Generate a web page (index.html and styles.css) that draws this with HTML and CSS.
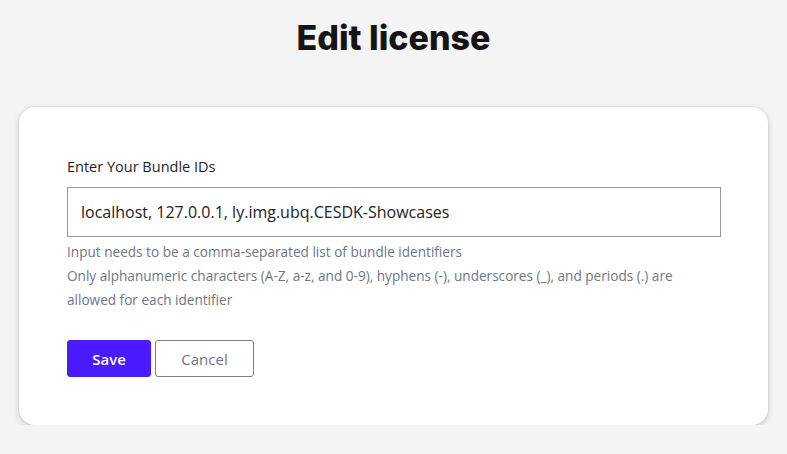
FILE: index.html
```html
<!DOCTYPE html>
<html lang="en">
<head>
<meta charset="utf-8">
<title>Edit license</title>
<link rel="stylesheet" href="styles.css">
</head>
<body>
<main class="page">
  <h1 class="title">Edit license</h1>
  <section class="card">
    <form class="form">
      <label class="label" for="bundle">Enter Your Bundle IDs</label>
      <input class="input" id="bundle" type="text" value="localhost, 127.0.0.1, ly.img.ubq.CESDK-Showcases">
      <p class="help">Input needs to be a comma-separated list of bundle identifiers</p>
      <p class="help">Only alphanumeric characters (A-Z, a-z, and 0-9), hyphens (-), underscores (_), and periods (.) are allowed for each identifier</p>
      <div class="actions">
        <button type="button" class="btn btn-primary">Save</button>
        <button type="button" class="btn btn-secondary">Cancel</button>
      </div>
    </form>
  </section>
</main>
</body>
</html>
```
FILE: styles.css
```css
* { box-sizing: border-box; }
html, body { margin: 0; padding: 0; }
body {
  background: #f4f4f4;
  font-family: "Open Sans", "Noto Sans", sans-serif;
  color: #161616;
}
.page {
  padding: 14px 19px 0 19px;
  display: flex;
  flex-direction: column;
}
.title {
  margin: 0;
  text-align: center;
  font-family: Inter, "Noto Sans", sans-serif;
  font-weight: 800;
  font-size: 34px;
  line-height: 48px;
  letter-spacing: 0;
  color: #141414;
}
.card {
  margin-top: 45px;
  background: #ffffff;
  border-radius: 16px;
  box-shadow: 0 2px 6px rgba(0,0,0,0.18), 0 0 0 1px rgba(0,0,0,0.04);
  padding: 50px 47px 48px 48px;
}
.form { display: flex; flex-direction: column; }
.label {
  font-size: 14.5px;
  line-height: 20px;
  color: #1e1e1e;
  margin-bottom: 10px;
}
.input {
  height: 50px;
  border: 1px solid #999999;
  border-radius: 0;
  padding: 0 13px;
  font-family: "Open Sans", "Noto Sans", sans-serif;
  font-size: 16px;
  color: #222;
  margin-bottom: 3px;
  outline: none;
}
.help {
  margin: 0;
  max-width: 650px;
  font-size: 13.6px;
  line-height: 24px;
  color: #6f7780;
}
.actions {
  display: flex;
  gap: 4px;
  margin-top: 28px;
}
.btn {
  height: 37px;
  border-radius: 3px;
  font-family: "Open Sans", "Noto Sans", sans-serif;
  font-size: 15px;
  cursor: pointer;
}
.btn-primary {
  width: 84px;
  background: #4a1bff;
  border: 1px solid #4a1bff;
  color: #ffffff;
  font-weight: 600;
}
.btn-secondary {
  width: 99px;
  background: #ffffff;
  border: 1px solid #7a8288;
  color: #6f7780;
}
```
